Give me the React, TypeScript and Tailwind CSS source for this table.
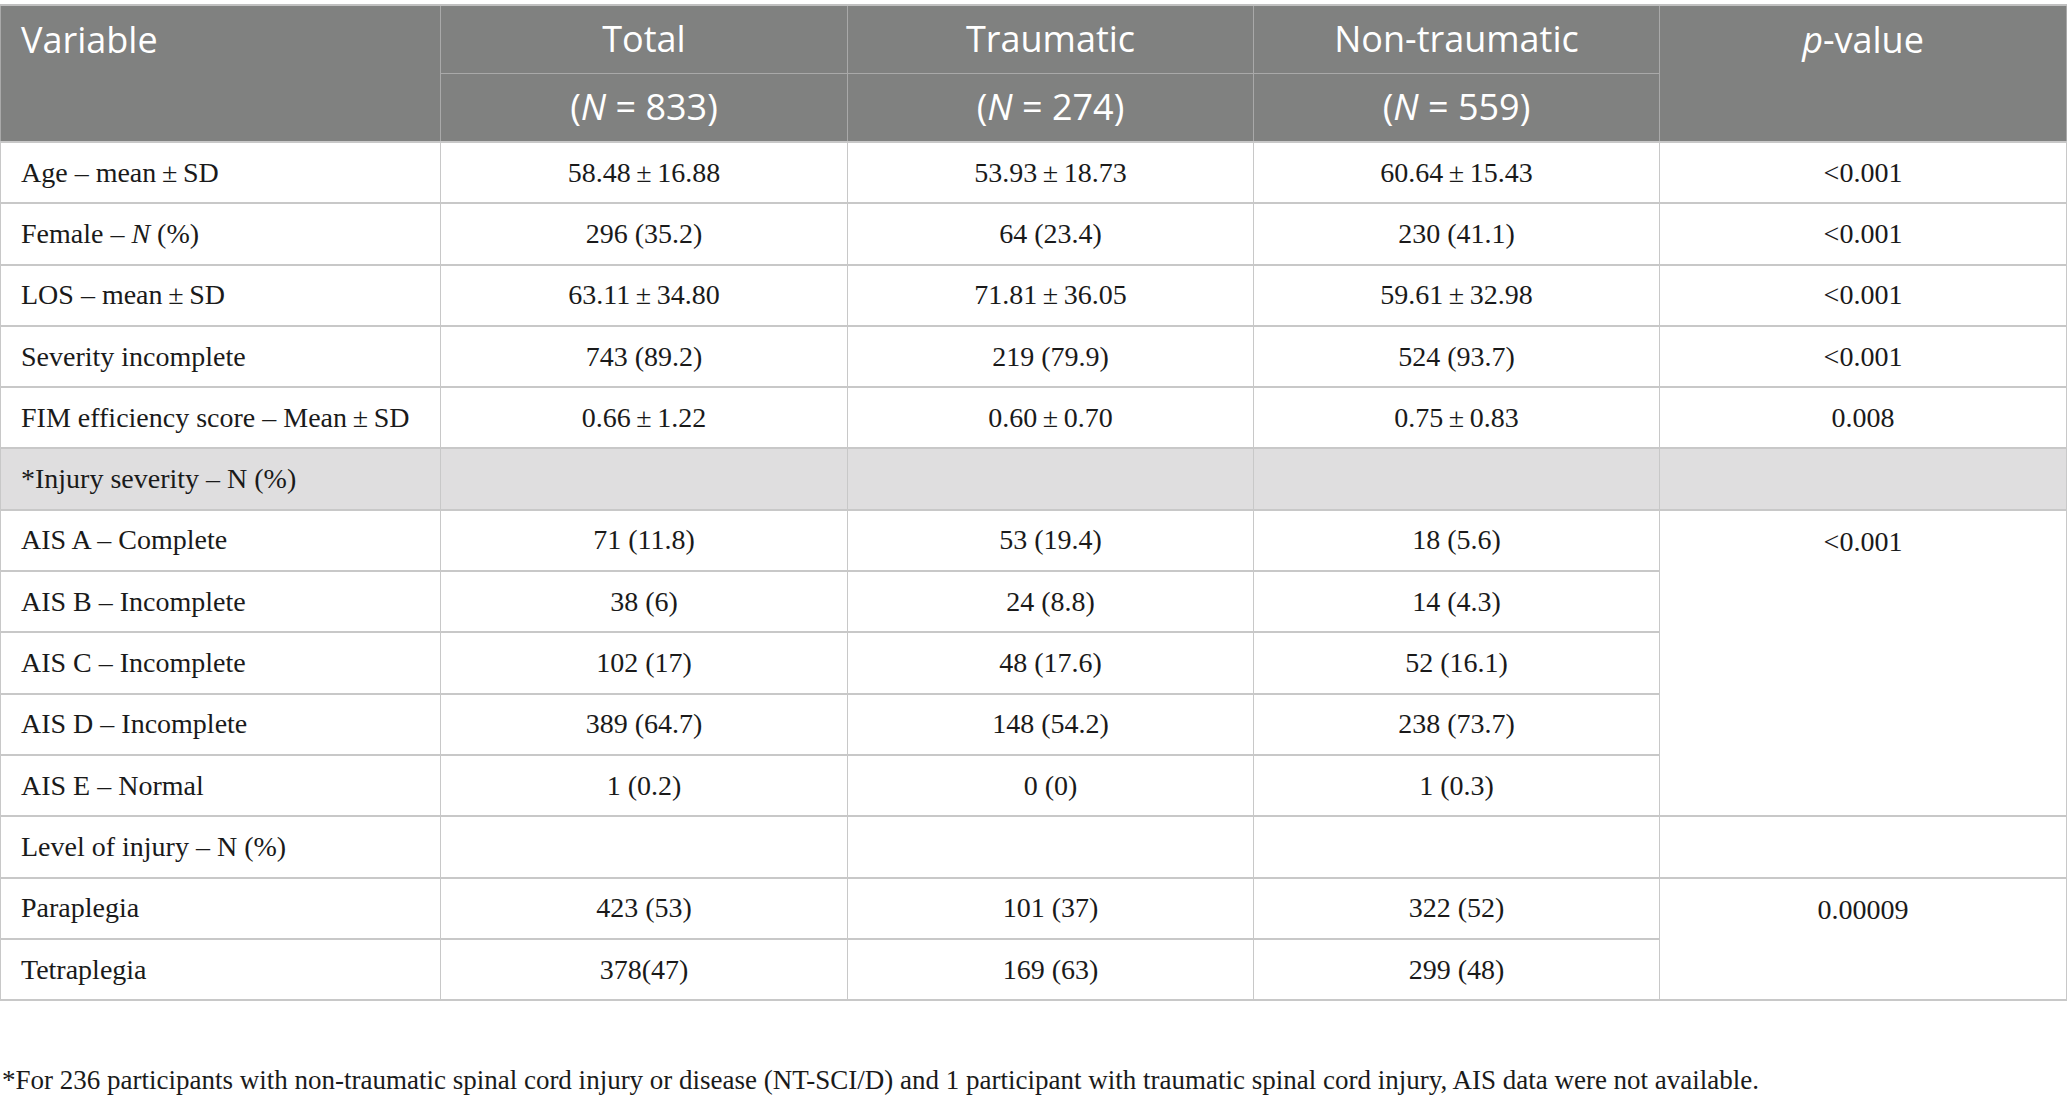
import React from 'react'

type Row = {
  label: React.ReactNode
  total?: string
  trau?: string
  non?: string
  p?: string | null
  span?: number
  shaded?: boolean
}

const pm = (a: string, b: string) => `${a}\u2009±\u2009${b}`

const rows: Row[] = [
  { label: <>Age – mean{'\u2009'}±{'\u2009'}SD</>, total: pm('58.48', '16.88'), trau: pm('53.93', '18.73'), non: pm('60.64', '15.43'), p: '<0.001' },
  { label: <>Female – <i>N</i> (%)</>, total: '296 (35.2)', trau: '64 (23.4)', non: '230 (41.1)', p: '<0.001' },
  { label: <>LOS – mean{'\u2009'}±{'\u2009'}SD</>, total: pm('63.11', '34.80'), trau: pm('71.81', '36.05'), non: pm('59.61', '32.98'), p: '<0.001' },
  { label: 'Severity incomplete', total: '743 (89.2)', trau: '219 (79.9)', non: '524 (93.7)', p: '<0.001' },
  { label: <>FIM efficiency score – Mean{'\u2009'}±{'\u2009'}SD</>, total: pm('0.66', '1.22'), trau: pm('0.60', '0.70'), non: pm('0.75', '0.83'), p: '0.008' },
  { label: '*Injury severity – N (%)', shaded: true, p: '' },
  { label: 'AIS A – Complete', total: '71 (11.8)', trau: '53 (19.4)', non: '18 (5.6)', p: '<0.001', span: 5 },
  { label: 'AIS B – Incomplete', total: '38 (6)', trau: '24 (8.8)', non: '14 (4.3)', p: null },
  { label: 'AIS C – Incomplete', total: '102 (17)', trau: '48 (17.6)', non: '52 (16.1)', p: null },
  { label: 'AIS D – Incomplete', total: '389 (64.7)', trau: '148 (54.2)', non: '238 (73.7)', p: null },
  { label: 'AIS E – Normal', total: '1 (0.2)', trau: '0 (0)', non: '1 (0.3)', p: null },
  { label: 'Level of injury – N (%)', p: '' },
  { label: 'Paraplegia', total: '423 (53)', trau: '101 (37)', non: '322 (52)', p: '0.00009', span: 2 },
  { label: 'Tetraplegia', total: '378(47)', trau: '169 (63)', non: '299 (48)', p: null },
]

const head = "text-white font-normal text-[36px] leading-none border border-[#a9a9a9] align-middle"
const cell = "border-y-2 border-x border-[#c8c8c8] h-[61.3px] text-[28px] leading-none align-middle text-center"

export default function App() {
  return (
    <div className="w-[2067px] h-[1105px] bg-white pt-[4px] text-[#1a1a1a]" style={{ fontFamily: '"Liberation Serif", "Times New Roman", serif' }}>
      <table className="w-[2066px] border-collapse table-fixed">
        <colgroup>
          <col className="w-[440px]" />
          <col className="w-[407px]" />
          <col className="w-[406px]" />
          <col className="w-[406px]" />
          <col className="w-[407px]" />
        </colgroup>
        <thead className="bg-[#808180]" style={{ fontFamily: '"Open Sans", "Noto Sans", sans-serif' }}>
          <tr className="h-[68px]">
            <th rowSpan={2} className={`${head} text-left align-top pl-[20px] pt-[16px] border-t-2 border-t-[#c0c0c0]`}>Variable</th>
            <th className={`${head} text-center border-t-2 border-t-[#c0c0c0]`}>Total</th>
            <th className={`${head} text-center border-t-2 border-t-[#c0c0c0]`}>Traumatic</th>
            <th className={`${head} text-center border-t-2 border-t-[#c0c0c0]`}>Non-traumatic</th>
            <th rowSpan={2} className={`${head} text-center align-top pt-[16px] border-t-2 border-t-[#c0c0c0]`}><i>p</i>-value</th>
          </tr>
          <tr className="h-[69px]">
            <th className={`${head} text-center`}>(<i>N</i> = 833)</th>
            <th className={`${head} text-center`}>(<i>N</i> = 274)</th>
            <th className={`${head} text-center`}>(<i>N</i> = 559)</th>
          </tr>
        </thead>
        <tbody>
          {rows.map((r, i) => (
            <tr key={i} className={r.shaded ? 'bg-[#dfdedf]' : 'bg-white'}>
              <td className={`${cell} text-left pl-[20px]`}>{r.label}</td>
              <td className={cell}>{r.total}</td>
              <td className={cell}>{r.trau}</td>
              <td className={cell}>{r.non}</td>
              {r.p !== null && (
                <td rowSpan={r.span ?? 1} className={`${cell} ${r.span ? 'align-top pt-[17px]' : ''}`}>
                  {r.p}
                </td>
              )}
            </tr>
          ))}
        </tbody>
      </table>
      <p className="mt-[66px] text-[27px] leading-none pl-[2px]">
        *For 236 participants with non-traumatic spinal cord injury or disease (NT-SCI/D) and 1 participant with traumatic spinal cord injury, AIS data were not available.
      </p>
    </div>
  )
}
